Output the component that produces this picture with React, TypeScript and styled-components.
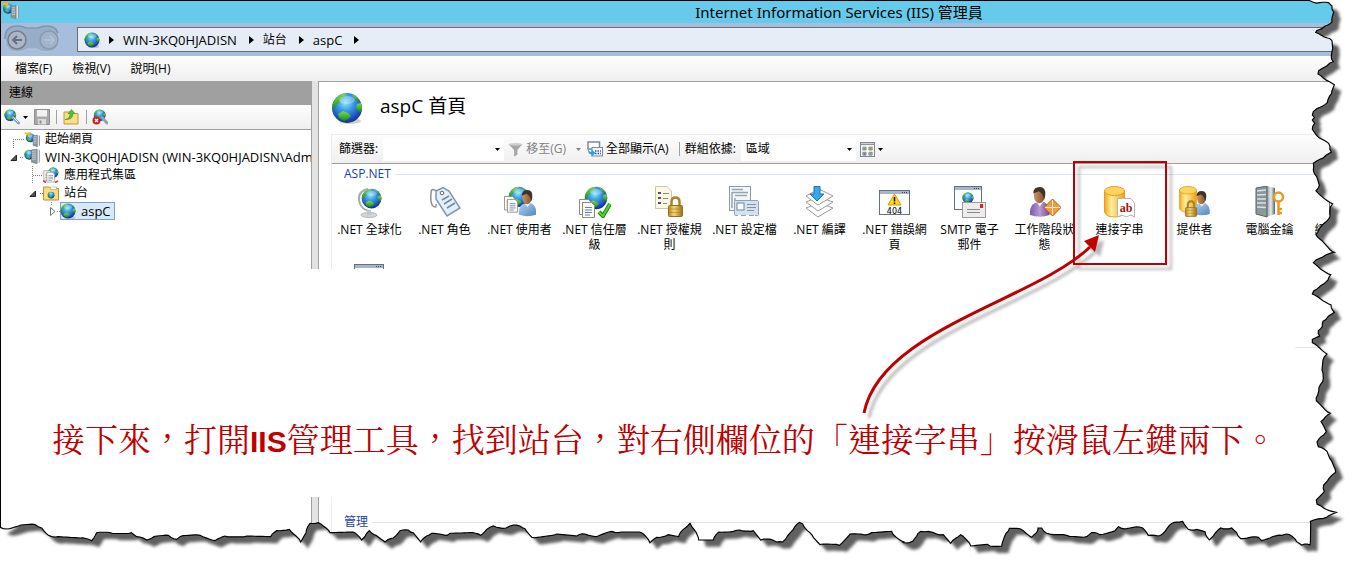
import React from "react";
import styled, { createGlobalStyle } from "styled-components";

const ui = `"Open Sans", "Noto Sans CJK TC", sans-serif`;

const GlobalStyle = createGlobalStyle`
  *, *::before, *::after { box-sizing: border-box; }
  body { margin: 0; background: #fff; font: 12px/18px ${ui}; color: #000; }
  button, input, select { font: inherit; color: inherit; }
  ul { list-style: none; margin: 0; padding: 0; }
`;

/* ---------- layout ---------- */

const Frame = styled.main`
  position: relative;
  display: flex;
  flex-direction: column;
  min-height: 100vh;
  padding: 1px 0 0 1px;
  overflow: hidden;
  box-shadow: inset 1px 1px 0 #000;
`;

const TitleBar = styled.header`
  display: grid;
  grid-template-columns: 1fr auto 1fr;
  height: 22px;
  background: #66cbea;
`;

const Title = styled.h1`
  margin: 0;
  padding-left: 320px;
  font: 400 15px/22px "Noto Sans", "Noto Sans CJK TC", sans-serif;
  white-space: nowrap;
`;

const NavBar = styled.nav`
  display: flex;
  align-items: center;
  height: 33px;
  padding-left: 3px;
  background: #a6bedb;
`;

const NavButtons = styled.div`
  position: relative;
  display: flex;
  gap: 10px;
  width: 73px;
  height: 29px;
  padding: 4px 3px;
`;

const NavShape = styled.svg`
  position: absolute;
  left: 0;
  top: 0;
`;

const RoundButton = styled.button`
  position: relative;
  width: 22px;
  height: 22px;
  padding: 0;
  border: 0;
  background: none;
`;

const Address = styled.div`
  display: flex;
  flex: 1;
  align-items: center;
  height: 25px;
  padding-left: 6px;
  border: 1px solid #656d79;
  background: #e6edf6;
`;

const Crumb = styled.a<{ $latin?: boolean }>`
  padding-right: 3px;
  font-size: ${(p) => (p.$latin ? 13 : 12)}px;
  color: #000;
  text-decoration: none;
  white-space: nowrap;
`;

const Arrow = styled.svg`
  margin: 0 9px;
  flex: none;
`;

const MenuBar = styled.div`
  display: flex;
  gap: 20px;
  height: 25px;
  padding: 0 14px;
  background: linear-gradient(#fdfdfd, #efefef);
`;

const PlainButton = styled.button`
  display: flex;
  align-items: center;
  gap: 3px;
  padding: 0;
  border: 0;
  background: none;
  white-space: nowrap;
  &:disabled { color: #838383; }
`;

const Workspace = styled.div`
  display: flex;
  height: 188px;
`;

const Connections = styled.aside`
  width: 310px;
  flex: none;
  overflow: hidden;
`;

const PanelTitle = styled.h2`
  margin: 0;
  padding-left: 8px;
  height: 24px;
  font: 400 12px/24px ${ui};
  background: #a0a0a0;
`;

const PanelTools = styled.div`
  display: flex;
  align-items: center;
  height: 25px;
  padding-left: 3px;
  border-bottom: 1px solid #a0a0a0;
  background: linear-gradient(#fdfdfd, #efefef);
`;

const ToolSeparator = styled.span<{ $gap: number }>`
  width: 1px;
  height: 14px;
  margin: 0 ${(p) => p.$gap}px;
  background: #a0a0a0;
`;

const Splitter = styled.div`
  width: 8px;
  flex: none;
  border: solid #a0a0a0;
  border-width: 0 1px;
  background: #e3e3e3;
`;

const TreeRow = styled.li`
  display: flex;
  align-items: center;
  height: 18px;
  white-space: nowrap;
`;

const TreeGuide = styled.svg`
  flex: none;
`;

const TreeLabel = styled.span<{ $selected?: boolean; $latin?: boolean }>`
  display: flex;
  align-items: center;
  gap: 5px;
  height: 18px;
  padding-right: 4px;
  font-size: ${(p) => (p.$latin ? 13 : 12)}px;
  ${(p) => p.$selected && "background: #d9e8fb; box-shadow: inset 0 0 0 1px #7da2ce;"}
`;

const Home = styled.section`
  flex: 1;
  min-width: 0;
  padding-left: 12px;
  border-top: 1px solid #a0a0a0;
  overflow: hidden;
`;

const HomeHeading = styled.div`
  display: flex;
  align-items: center;
  gap: 17px;
  height: 52px;
`;

const HomeTitle = styled.h2`
  margin: 0;
  padding-bottom: 4px;
  font: 400 19px/24px ${ui};
`;

const Features = styled.div`
  border: solid #ececec;
  border-width: 1px 0 0 1px;
`;

const FilterBar = styled.div`
  display: flex;
  align-items: center;
  height: 29px;
  padding-left: 7px;
  border-bottom: 1px solid #a0a0a0;
  background: linear-gradient(#fdfdfd, #efefef);
`;

const Combo = styled.div<{ $width: number }>`
  display: flex;
  align-items: center;
  width: ${(p) => p.$width}px;
  height: 23px;
  margin-left: 5px;
  padding-right: 4px;
  background: #fff;
`;

const ComboInput = styled.input`
  flex: 1;
  min-width: 0;
  padding: 0 4px;
  border: 0;
  background: none;
`;

const ComboSelect = styled.select`
  flex: 1;
  min-width: 0;
  padding: 0 5px;
  border: 0;
  background: none;
  appearance: none;
`;

const Spacer = styled.span<{ $width: number }>`
  width: ${(p) => p.$width}px;
`;

const GroupHeading = styled.h3`
  display: flex;
  align-items: center;
  gap: 4px;
  height: 20px;
  margin: 0;
  padding-left: 12px;
  font: 400 12px/20px ${ui};
  color: #1e3f9f;
  &::after { content: ""; flex: 1; height: 1px; background: #dde6f0; }
`;

const FeatureGrid = styled.ul`
  display: grid;
  grid-template-columns: repeat(14, 75px);
  grid-auto-rows: 78px;
  padding-top: 2px;
`;

const Feature = styled.li`
  display: flex;
  flex-direction: column;
  align-items: center;
  gap: 4px;
  line-height: 15px;
  text-align: center;
`;

const FeatureLabel = styled.span`
  width: 70px;
  word-break: break-all;
`;

const Note = styled.div`
  position: relative;
  display: flex;
  align-items: center;
  height: 228px;
  padding: 0 0 0 51px;
  font: 400 33px/48px "Noto Serif CJK TC", "Noto Sans CJK TC", serif;
  color: #c00000;
  white-space: nowrap;
`;

const NoteText = styled.p`
  margin: 0;
  padding-top: 114px;
  b { font: 700 30px/48px "Liberation Sans", sans-serif; }
`;

const GroupLine = styled.span`
  position: absolute;
  right: 0;
  top: 78px;
  width: 62px;
  height: 1px;
  background: #dde6f0;
`;

const Lower = styled.div`
  display: flex;
  flex: 1;
  padding-left: 310px;
`;

const LowerGroup = styled.div`
  flex: 1;
  margin-left: 12px;
  padding-top: 15px;
  border-left: 1px solid #ececec;
`;

const TornEdge = styled.svg`
  position: absolute;
  left: 0;
  top: 0;
  width: 100%;
  height: 100%;
  pointer-events: none;
`;

const Callout = styled.svg`
  position: absolute;
  left: 0;
  top: 0;
  pointer-events: none;
`;

const SharedDefs = styled.svg`
  position: absolute;
`;

/* ---------- drawings ---------- */

const Defs = () => (
  <SharedDefs width="0" height="0" aria-hidden="true">
    <defs>
      <radialGradient id="sea" cx="45%" cy="32%" r="68%">
        <stop offset="0" stopColor="#8fe6fb" />
        <stop offset=".4" stopColor="#3a9be4" />
        <stop offset=".8" stopColor="#1f4fc0" />
        <stop offset="1" stopColor="#132f86" />
      </radialGradient>
      <linearGradient id="land" x1="0" y1="0" x2="0" y2="1">
        <stop offset="0" stopColor="#7fdc45" />
        <stop offset="1" stopColor="#128c1c" />
      </linearGradient>
      <linearGradient id="gold" x1="0" x2="1">
        <stop offset="0" stopColor="#f3a81c" />
        <stop offset=".35" stopColor="#fff0a0" />
        <stop offset="1" stopColor="#f0a010" />
      </linearGradient>
      <linearGradient id="brass" x1="0" x2="1">
        <stop offset="0" stopColor="#b98420" />
        <stop offset=".4" stopColor="#f4d87a" />
        <stop offset="1" stopColor="#a06c12" />
      </linearGradient>
      <linearGradient id="steel" x1="0" x2="1">
        <stop offset="0" stopColor="#9aa2a8" />
        <stop offset=".5" stopColor="#e6eaec" />
        <stop offset="1" stopColor="#5b646b" />
      </linearGradient>
      <linearGradient id="skin" x1="0" x2="1">
        <stop offset="0" stopColor="#c99565" />
        <stop offset="1" stopColor="#80512c" />
      </linearGradient>
      <linearGradient id="shirt" x1="0" x2="1" y2="1">
        <stop offset="0" stopColor="#b4d2f0" />
        <stop offset="1" stopColor="#5485ba" />
      </linearGradient>
      <linearGradient id="purple" x1="0" x2="1">
        <stop offset="0" stopColor="#7a5aa8" />
        <stop offset=".5" stopColor="#b79ad6" />
        <stop offset="1" stopColor="#6a4a98" />
      </linearGradient>
    </defs>
  </SharedDefs>
);

type Spot = { x?: number; y?: number; s?: number };

/* Each part is drawn on a grid of its own and placed with x, y and scale s. */
const place = ({ x = 0, y = 0, s = 1 }: Spot) => `translate(${x} ${y}) scale(${s})`;

const Globe = (p: Spot) => (
  <g transform={place(p)}>
    <circle cx="16" cy="16" r="15" fill="url(#sea)" />
    <path d="M3 9Q7 2 14 1.500L16 3L12 5L9 7L8 11L5 13L2 18Q0 13 3 9Z" fill="url(#land)" />
    <path d="M21 2Q27 5 29 10L26 9L23 6Z" fill="url(#land)" />
    <path d="M26 12L30 11Q32 16 30 20L27 19L25 16Z" fill="url(#land)" />
    <path d="M7 22L12 19L17 21L20 24L17 27L13 29L8 26Z" fill="url(#land)" />
    <ellipse cx="16" cy="8" rx="8" ry="4" fill="#fff" opacity=".25" />
  </g>
);

const Sheet = (p: Spot) => (
  <g transform={place(p)}>
    <path d="M.5.5H9.500L12.500 3.500V15.500H.5Z" fill="#fdfcf6" stroke="#8f8a7a" />
    <path d="M3 5.500H10M3 8H10M3 10.500H10M3 13H8" stroke="#5f7fb0" />
  </g>
);

const Person = ({ fill = "url(#shirt)", ...p }: Spot & { fill?: string }) => (
  <g transform={place(p)}>
    <path d="M1 26Q0 17 6 14.500L14 14Q20 17 19 26Q10 29 1 26Z" fill={fill} />
    <path d="M7 14L10 18L13 14Z" fill="#f5f5f5" />
    <ellipse cx="9.500" cy="8" rx="5" ry="7" fill="url(#skin)" />
    <path d="M4 6Q4 0 10 0Q16 0 15 8L14 12Q13 6 9 4Z" fill="#3f3428" />
  </g>
);

const Drum = (p: Spot) => (
  <g transform={place(p)}>
    <path d="M.5 5V26Q2 31 10.500 31T20.500 26V5Z" fill="url(#gold)" stroke="#e2a020" />
    <ellipse cx="10.500" cy="5" rx="10" ry="4.500" fill="#fbd560" stroke="#e2a020" />
  </g>
);

const Padlock = (p: Spot) => (
  <g transform={place(p)}>
    <path d="M3.500 10V6Q3.500 1.500 7.500 1.500T11.500 6V10" fill="none" stroke="#a8812c" strokeWidth="2.500" />
    <rect x=".5" y="9.500" width="14" height="11" rx="1" fill="url(#brass)" stroke="#94701f" />
    <path d="M1 13H14M1 16.500H14" stroke="#a9812f" opacity=".6" />
  </g>
);

const Win = ({ w, h, ...p }: Spot & { w: number; h: number }) => (
  <g transform={place(p)}>
    <rect x=".5" y=".5" width={w - 1} height={h - 1} fill="#fbfcfd" stroke="#66717f" />
    <rect x="1" y="1" width={w - 2} height="3" fill="#a8b4c8" />
    <path d={`M${w - 8} 2.500H${w - 2}`} stroke="#445" strokeDasharray="1 1" />
  </g>
);

const Tower = (p: Spot) => (
  <g transform={place(p)}>
    <path d="M0 2L11 0V31L0 28Z" fill="#8b959c" />
    <path d="M11 0L19 2V28L11 31Z" fill="url(#steel)" />
    <path d="M1 5L10 4M1 9L10 8.500M1 13H10M1 17H10M1 21L10 21.500" stroke="#d9e0e4" strokeWidth="1.500" />
    <path d="M0 2L11 0V31L0 28Z" fill="none" stroke="#59636b" />
    <rect x="7" y="27" width="2" height="2" fill="#4bdc2c" />
  </g>
);

const icons: Record<string, React.ReactNode> = {
  globalization: (
    <>
      <path d="M14 3Q4 5 5 14T15 25" fill="none" stroke="#a9adb0" strokeWidth="2" />
      <ellipse cx="15" cy="29" rx="8" ry="2.500" fill="#d4d7d9" stroke="#b4b8ba" />
      <rect x="13" y="24" width="4" height="5" fill="#c3c6c9" />
      <Globe x={7} y={2} s={0.66} />
    </>
  ),
  roles: (
    <>
      <path d="M10 7Q2 0 2 7Q1 17 4 20Q8 23 7 18" fill="none" stroke="#8b9299" strokeWidth="1.500" />
      <path d="M7 5L14 1.500L20 5L31 22L18 30L7 13Z" fill="#e3eef7" stroke="#7c98ae" strokeWidth="1.500" />
      <circle cx="13" cy="7" r="1.800" fill="#fff" stroke="#666" />
      <path d="M13 14L20 10M15 18L23 13M18 22L26 17" stroke="#7388a4" strokeWidth="1.500" />
    </>
  ),
  users: (
    <>
      <Globe x={4} y={0} s={0.68} />
      <Sheet x={0} y={10} s={0.9} />
      <Sheet x={3} y={13} s={0.85} />
      <Person x={14} y={4} s={0.95} />
    </>
  ),
  trust: (
    <>
      <Globe x={5} y={0} s={0.75} />
      <Sheet x={0} y={13} />
      <Sheet x={3} y={16} />
      <path d="M20 26L24 30L31 18" fill="none" stroke="#118c12" strokeWidth="4" />
      <path d="M20 26L24 30L31 18" fill="none" stroke="#55d62c" strokeWidth="2" />
    </>
  ),
  rules: (
    <>
      <path d="M1.500.5H13L17.500 5V22.500H1.500Z" fill="#fdf8e4" stroke="#cfc6a4" />
      <path d="M4 7H7M4 12H7M4 17H7" stroke="#555" strokeWidth="2" />
      <path d="M9 7.500H15M9 12.500H14M9 17.500H13" stroke="#888" />
      <Padlock x={14} y={10} />
    </>
  ),
  profile: (
    <>
      <rect x=".5" y=".5" width="21" height="24" fill="#f4f7fa" stroke="#8e99a6" />
      <path d="M3 3.500H14M3 6V22M3 6.500H19M6 9.500H18M6 12V20" stroke="#98a3b0" strokeWidth="1.500" fill="none" />
      <rect x="5.500" y="14.500" width="24" height="15" rx="1" fill="#d5e1ed" stroke="#8fa3b8" />
      <rect x="8" y="17" width="7" height="7" fill="#fff" stroke="#6788b0" />
      <path d="M18 18.500H27M18 21.500H27M18 24.500H25" stroke="#7c93ad" />
      <path d="M9 30H26" stroke="#fff" strokeWidth="2" strokeDasharray="3 5" />
    </>
  ),
  compile: (
    <>
      <path d="M2 22L15 17L29 22L14 31Z" fill="#fff" stroke="#9a9a9a" />
      <path d="M2 16L15 11L29 16L14 25Z" fill="#fff" stroke="#9a9a9a" />
      <path d="M2 10L15 3L29 10L14 19Z" fill="#fff" stroke="#9a9a9a" />
      <path d="M10 .5H16V8H20L13 15L6 8H10Z" fill="#36a9ec" stroke="#1673b8" />
    </>
  ),
  errors: (
    <>
      <Win x={0} y={4} w={31} h={25} />
      <path d="M15.500 8L22 19H9Z" fill="#ffd91a" stroke="#d39c00" />
      <path d="M15.500 11V15.500M15.500 16.500V18" stroke="#111" strokeWidth="1.500" />
      <text x="15.500" y="27.500" textAnchor="middle" fontFamily="DejaVu Sans" fontSize="8">404</text>
    </>
  ),
  smtp: (
    <>
      <Win x={0} y={0} w={28} h={24} />
      <Globe x={8} y={6} s={0.37} />
      <rect x="8.500" y="16.500" width="23" height="15" fill="#ececec" stroke="#9b9b9b" />
      <path d="M13 23.500H26M13 26.500H26" stroke="#8a8a8a" />
      <rect x="26" y="18" width="3" height="4" fill="#e02020" />
    </>
  ),
  session: (
    <>
      <Person x={0} y={1} s={1.08} fill="url(#purple)" />
      <path d="M23.500 13L32 21.500L23.500 30L15 21.500Z" fill="#f79a3a" stroke="#b4570a" />
      <path d="M23.500 14V29M16 21.500H31" stroke="#fff0d8" />
    </>
  ),
  connection: (
    <>
      <Drum />
      <path d="M13.500 12.500H27L30.500 17V31L27 29L22 31L18 29L13.500 31Z" fill="#fff" stroke="#b5b5b5" />
      <text x="22" y="26" textAnchor="middle" fontFamily="Liberation Serif" fontWeight="700" fontSize="12" fill="#a01515">ab</text>
    </>
  ),
  providers: (
    <>
      <Drum s={0.85} />
      <Person x={14} y={5} s={0.88} />
      <Padlock x={6} y={14} s={0.8} />
    </>
  ),
  machineKey: (
    <>
      <Tower x={2} y={0} />
      <circle cx="24.500" cy="11" r="4.500" fill="#fff" stroke="#e59a24" strokeWidth="2.500" />
      <path d="M24.500 15V29M24.500 23H28M24.500 27H28" fill="none" stroke="#e59a24" strokeWidth="2.500" />
    </>
  ),
  pages: <Win x={0} y={3} w={31} h={26} />,
  window: <Win x={0} y={0} w={30} h={26} />,
  start: (
    <>
      <Globe x={3} y={4} s={0.6} />
      <path d="M2 6L14 1L12 7Z" fill="#f6b51e" />
      <path d="M1 4Q8 4 12 10" fill="none" stroke="#f6b51e" strokeWidth="3" />
      <Tower x={18} y={8} s={0.75} />
    </>
  ),
  server: (
    <>
      <Globe x={0} y={1} s={0.66} />
      <Tower x={15} y={0} s={0.95} />
    </>
  ),
  pools: (
    <>
      <Globe x={9} y={0} s={0.7} />
      <Sheet x={1} y={7} s={1.3} />
      <Sheet x={7} y={10} s={1.3} />
      <path d="M0 28L6 31M24 31L30 28" stroke="#d83a2a" strokeWidth="3" />
    </>
  ),
  sites: (
    <>
      <path d="M1 4H13L16 7H31V30H1Z" fill="#f7dc83" stroke="#b99336" strokeWidth="2" />
      <path d="M15 4H27V9H15Z" fill="#fff" stroke="#b99336" />
      <Globe x={9} y={13} s={0.45} />
    </>
  ),
  globe: (
    <>
      <ellipse cx="19" cy="29" rx="11" ry="3" fill="#888" opacity=".4" />
      <Globe />
    </>
  ),
  connect: (
    <>
      <Globe s={0.78} />
      <path d="M18 17L29 28" stroke="#86a5bd" strokeWidth="6" strokeLinecap="round" />
      <path d="M19 17L28 26" stroke="#e8f1f7" strokeWidth="2" />
    </>
  ),
  disconnect: (
    <>
      <Globe x={3} s={0.78} />
      <path d="M20 17L30 28" stroke="#86a5bd" strokeWidth="6" strokeLinecap="round" />
      <circle cx="9" cy="23" r="8" fill="#cf2020" />
      <path d="M6 20L12 26M12 20L6 26" stroke="#fff" strokeWidth="2.500" />
    </>
  ),
  save: (
    <>
      <path d="M1 1H31V31H1Z" fill="#a9a9a9" stroke="#8e8e8e" strokeWidth="2" />
      <rect x="6" y="2" width="20" height="13" fill="#f2f2f2" />
      <rect x="8" y="20" width="16" height="11" fill="#dcdcdc" />
      <rect x="11" y="23" width="4" height="6" fill="#8e8e8e" />
    </>
  ),
  folderUp: (
    <>
      <path d="M2 6H14L17 9H30V30H2Z" fill="#f8dd8a" stroke="#c09a3c" strokeWidth="2" />
      <path d="M4 21Q14 20 14 9H10L17 1L24 9H20Q20 22 4 21Z" fill="#4fc22c" stroke="#2a8c17" />
    </>
  ),
  funnel: (
    <>
      <path d="M1 4H31L20 17V27L13 31V17Z" fill="#a6a6a6" />
      <ellipse cx="16" cy="5" rx="14" ry="3" fill="#cfcfcf" />
    </>
  ),
  showAll: (
    <>
      <path d="M2 2H25V16H2Z" fill="#fff" stroke="#7e8b98" strokeWidth="3" />
      <rect x="10" y="13" width="21" height="17" fill="#f3f5f8" stroke="#7e8b98" strokeWidth="2" />
      <path d="M16 20H28M16 25H28" stroke="#3d62a8" strokeWidth="3" strokeDasharray="3 2" />
      <path d="M2 14Q3 22 9 22V17L17 24L9 31V27Q1 26 2 14Z" fill="#2f9be0" />
    </>
  ),
  view: (
    <>
      <rect x="1" y="1" width="30" height="30" fill="#f6f6f3" stroke="#777f88" strokeWidth="2" />
      <path d="M2 5H30" stroke="#8a929b" strokeWidth="3" />
      <path d="M6 11h7v6H6zM19 11h7v6h-7zM6 22h7v6H6zM19 22h7v6h-7z" fill="#b8c8b0" stroke="#6b7680" strokeWidth="1.500" />
      <path d="M8 13h3v3H8zM21 24h3v3h-3z" fill="#4db030" />
      <path d="M21 13h3v3h-3z" fill="#d86a30" />
      <path d="M8 24h3v3H8z" fill="#4455d0" />
    </>
  ),
};

const IconSvg = styled.svg`
  flex: none;
  display: block;
`;

const Icon = ({ name, size = 32 }: { name: string; size?: number }) => (
  <IconSvg width={size} height={size} viewBox="0 0 32 32" aria-hidden="true">
    {icons[name]}
  </IconSvg>
);

const Caret = ({ color = "#000" }: { color?: string }) => (
  <IconSvg width="5" height="3" viewBox="0 0 5 3" aria-hidden="true">
    <path d="M0 0H5L2.500 3Z" fill={color} />
  </IconSvg>
);

const CrumbArrow = () => (
  <Arrow width="5" height="8" viewBox="0 0 5 8" aria-hidden="true">
    <path d="M0 0L5 4L0 8Z" />
  </Arrow>
);

/* ---------- torn paper edge ---------- */

type Point = [number, number];

const points = (dx: number, dy: number, text: string): Point[] =>
  text.split(" ").map((pair) => {
    const [x, y] = pair.split(",").map(Number);
    return [x + dx, y + dy];
  });

const edge: Point[] = [
  ...points(3360, 0, "570,2 578,6 600,8 625,8 636,18 636,28 641,36 637,50 636,66 622,76 606,86 590,92 587,97 604,106 622,114 636,122 638,145 635,160 635,178 640,185 620,198 596,212 594,222 610,234 630,246 643,254 636,272 628,290 622,308 600,322 580,335 577,345 583,352 577,360 584,370 577,388 588,404 606,418 626,430 630,440 634,456 618,466 600,478 580,490 580,510 590,530 598,555 588,572 606,590 638,612 630,628 630,650 610,672 596,690 588,704 606,722 624,742 643,757 616,766 596,776 580,788 594,800 632,824 624,840 604,856 592,866"),
  ...points(3771, 840, "170,33 166,42 190,56 222,75 232,97 215,108 198,124 196,140 184,152 188,168 166,178 166,188 188,204 210,222 198,240 195,270 197,305 186,322 182,345 178,362 198,382 220,400 204,412 192,425 200,438 208,455 192,470 180,486 184,500 210,514 218,535 236,577 216,595 200,615 202,635 178,660 180,672 200,684 225,694 238,697 218,706 190,716 160,724"),
  ...points(2700, 1470, "1230,165 1205,165 1190,155 1175,138 1160,132 1145,136 1110,144 1085,152 1075,142 1050,142 1022,146 1010,128 995,114 962,114 945,130 928,150 915,125 890,118 865,118 848,94 830,96 808,106 795,124 775,138 745,136 728,114 700,112 680,116 655,110 645,122 600,134 575,128 560,140 500,136 470,134 440,130 425,114 414,114 408,130 395,142 370,122 350,115 328,115 318,130 305,168 270,168 262,163 212,168 200,150 182,134 168,144 152,160 130,134 100,128 85,124 62,124 50,138 38,154 10,158"),
  ...points(1350, 1470, "1362,156 1340,143 1325,124 1265,128 1240,134 1200,132 1168,166 1110,164 1090,142 1072,122 1058,102 1048,97 1030,118 1012,138 998,156 980,156 968,150 932,150 910,122 870,120 850,124 806,126 790,150 746,150 732,118 720,100 700,118 686,140 655,134 620,142 600,158 588,140 568,126 515,126 485,124 440,140 405,132 380,138 320,132 246,142 225,116 210,108 180,108 168,114 130,108 110,118 92,136 60,128 0,130"),
  ...points(0, 1470, "1335,136 1295,130 1280,138 1262,156 1240,128 1225,120 1200,122 1180,144 1155,156 1128,136 1108,122 1100,130 1085,150 1060,126 990,128 970,108 955,98 930,100 918,128 902,156 888,138 868,118 830,122 812,140 740,138 675,138 645,152 600,136 540,140 530,148 505,136 462,140 440,150 410,140 394,128 330,128 290,128 275,152 240,144 175,140 145,136 125,114 105,104 55,108 30,116 0,112"),
];

/* Splits long runs and nudges the new points, which gives the paper its rough fibres. */
const roughen = (line: Point[]): Point[] => {
  const out: Point[] = [line[0]];
  for (let i = 1; i < line.length; i++) {
    const [ax, ay] = line[i - 1];
    const [bx, by] = line[i];
    const length = Math.hypot(bx - ax, by - ay);
    const steps = Math.max(1, Math.floor(length / 8));
    for (let k = 1; k < steps; k++) {
      const nudge = length > 65 && ax === bx ? 0 : (((i * 7 + k * 5) % 5) - 2) * 1.2;
      const flat = Math.abs(bx - ax) > Math.abs(by - ay);
      out.push([
        ax + ((bx - ax) * k) / steps + (flat ? 0 : nudge),
        ay + ((by - ay) * k) / steps + (flat ? nudge : 0),
      ]);
    }
    out.push([bx, by]);
  }
  return out;
};

const edgeLine = roughen(edge).map(([x, y]) => `${x.toFixed(1)},${y.toFixed(1)}`).join("L");
const paper = `M0,0L3930,0L${edgeLine}Z`;
const outside = `M-30,-30H4200V1800H-30Z${paper}`;

const Torn = () => (
  <TornEdge viewBox="0 0 4071 1704" preserveAspectRatio="none" aria-hidden="true">
    <defs>
      <clipPath id="beyond"><path d={outside} clipRule="evenodd" /></clipPath>
      <filter id="soft" x="-5%" y="-5%" width="110%" height="110%"><feGaussianBlur stdDeviation="5" /></filter>
    </defs>
    <g clipPath="url(#beyond)">
      <rect width="4071" height="1704" fill="#fff" />
      <path d={`M30,30H3930L${edgeLine}L30,1560Z`} transform="translate(21 20)" fill="#606060" filter="url(#soft)" />
      <path d="M-10,1400H18V1704H-10Z" fill="#fff" />
    </g>
    <path d={`M${edgeLine}`} fill="none" stroke="#000" strokeWidth="3.500" />
  </TornEdge>
);

/* ---------- data ---------- */

const features: [string, string][] = [
  ["globalization", ".NET 全球化"],
  ["roles", ".NET 角色"],
  ["users", ".NET 使用者"],
  ["trust", ".NET 信任層級"],
  ["rules", ".NET 授權規則"],
  ["profile", ".NET 設定檔"],
  ["compile", ".NET 編譯"],
  ["errors", ".NET 錯誤網頁"],
  ["smtp", "SMTP 電子郵件"],
  ["session", "工作階段狀態"],
  ["connection", "連接字串"],
  ["providers", "提供者"],
  ["machineKey", "電腦金鑰"],
  ["pages", "網頁和控制"],
  ["window", ""],
];

type Node = {
  icon: string;
  label: string;
  indent: number;
  lines: string;
  latin?: boolean;
  mark?: "open" | "closed";
  markX?: number;
  selected?: boolean;
};

const nodes: Node[] = [
  { icon: "start", label: "起始網頁", indent: 23, lines: "M12.500 9V18M12 9.500H23" },
  { icon: "server", label: "WIN-3KQ0HJADISN (WIN-3KQ0HJADISN\\Admi", indent: 23, lines: "M19 9.500H23", latin: true, mark: "open", markX: 10 },
  { icon: "pools", label: "應用程式集區", indent: 42, lines: "M31.500 0V18M32 9.500H42" },
  { icon: "sites", label: "站台", indent: 42, lines: "M39 9.500H42", mark: "open", markX: 29 },
  { icon: "globe", label: "aspC", indent: 59, lines: "M50.500 0V3M56 9.500H59", latin: true, mark: "closed", markX: 49, selected: true },
];

export default function App() {
  return (
    <Frame>
      <GlobalStyle />
      <Defs />
      <TitleBar>
        <Icon name="start" size={18} />
        <Title>Internet Information Services (IIS) 管理員</Title>
      </TitleBar>
      <NavBar>
        <NavButtons>
          <NavShape width="56" height="29" viewBox="0 0 56 29" aria-hidden="true">
            <path d="M1 14Q1 1 13 1Q18 1 22 3H34Q38 1 43 1Q55 1 55 14T43 27Q37 27 33 24H23Q19 27 13 27Q1 27 1 14Z" fill="#98adc8" stroke="#b8c8dc" />
            <path d="M1 14Q1 1 13 1Q18 1 22 3H34Q38 1 43 1Q52 1 54 8" fill="none" stroke="#7d92ae" strokeWidth="1.500" />
          </NavShape>
          <RoundButton aria-label="上一頁">
            <svg width="22" height="22" viewBox="0 0 22 22">
              <circle cx="10" cy="11" r="9" fill="#a9b7c8" stroke="#757f8c" strokeWidth="1.500" />
              <path d="M15 11H6M10 7L6 11L10 15" fill="none" stroke="#68727e" strokeWidth="2" />
            </svg>
          </RoundButton>
          <RoundButton aria-label="下一頁">
            <svg width="22" height="22" viewBox="0 0 22 22">
              <circle cx="10" cy="11" r="9" fill="#a0b3ca" stroke="#8b99ab" strokeWidth="1.500" />
              <path d="M5 11H15M11 7L15 11L11 15" fill="none" stroke="#b4c4d7" strokeWidth="1.500" />
            </svg>
          </RoundButton>
        </NavButtons>
        <Address>
          <Icon name="globe" size={16} />
          <CrumbArrow />
          <Crumb href="#server" $latin>WIN-3KQ0HJADISN</Crumb>
          <CrumbArrow />
          <Crumb href="#sites">站台</Crumb>
          <CrumbArrow />
          <Crumb href="#aspc" $latin>aspC</Crumb>
          <CrumbArrow />
        </Address>
      </NavBar>
      <MenuBar>
        <PlainButton>檔案(F)</PlainButton>
        <PlainButton>檢視(V)</PlainButton>
        <PlainButton>說明(H)</PlainButton>
      </MenuBar>
      <Workspace>
        <Connections>
          <PanelTitle>連線</PanelTitle>
          <PanelTools>
            <PlainButton aria-label="連線到"><Icon name="connect" size={16} /><Caret /></PlainButton>
            <Spacer $width={6} />
            <PlainButton aria-label="儲存" disabled><Icon name="save" size={16} /></PlainButton>
            <ToolSeparator $gap={6} />
            <PlainButton aria-label="向上"><Icon name="folderUp" size={16} /></PlainButton>
            <Spacer $width={2} />
            <ToolSeparator $gap={5} />
            <PlainButton aria-label="中斷連線"><Icon name="disconnect" size={16} /></PlainButton>
          </PanelTools>
          <ul>
            {nodes.map((n) => (
              <TreeRow key={n.label}>
                <TreeGuide width={n.indent} height="18" aria-hidden="true">
                  <path d={n.lines} fill="none" stroke="#808080" strokeDasharray="1 1" />
                  {n.mark === "open" && <path d="M5.500 7V12.500H0Z" transform={`translate(${n.markX} 0)`} fill="#555" stroke="#222" />}
                  {n.mark === "closed" && <path d="M.5 5.500L5 9.500L.5 13.500Z" transform={`translate(${n.markX} 0)`} fill="#fff" stroke="#777" />}
                </TreeGuide>
                <TreeLabel $selected={n.selected} $latin={n.latin}>
                  <Icon name={n.icon} size={16} />
                  {n.label}
                </TreeLabel>
              </TreeRow>
            ))}
          </ul>
        </Connections>
        <Splitter />
        <Home>
          <HomeHeading>
            <Icon name="globe" size={32} />
            <HomeTitle>aspC 首頁</HomeTitle>
          </HomeHeading>
          <Features>
            <FilterBar>
              <label htmlFor="filter">篩選器:</label>
              <Combo $width={121}>
                <ComboInput id="filter" />
                <Caret />
              </Combo>
              <Spacer $width={4} />
              <PlainButton disabled><Icon name="funnel" size={15} />移至(G)</PlainButton>
              <Spacer $width={10} />
              <Caret color="#838383" />
              <Spacer $width={6} />
              <PlainButton><Icon name="showAll" size={16} />全部顯示(A)</PlainButton>
              <Spacer $width={5} />
              <ToolSeparator $gap={5} />
              <label htmlFor="group">群組依據:</label>
              <Combo $width={115}>
                <ComboSelect id="group" defaultValue="area">
                  <option value="area">區域</option>
                </ComboSelect>
                <Caret />
              </Combo>
              <Spacer $width={4} />
              <PlainButton aria-label="檢視"><Icon name="view" size={15} /><Caret /></PlainButton>
            </FilterBar>
            <GroupHeading>ASP.NET</GroupHeading>
            <FeatureGrid>
              {features.map(([icon, label]) => (
                <Feature key={icon}>
                  <Icon name={icon} />
                  <FeatureLabel>{label}</FeatureLabel>
                </Feature>
              ))}
            </FeatureGrid>
          </Features>
        </Home>
      </Workspace>
      <Note>
        <GroupLine />
        <NoteText>接下來，打開<b>IIS</b>管理工具，找到站台，對右側欄位的「連接字串」按滑鼠左鍵兩下。</NoteText>
      </Note>
      <Lower>
        <Splitter />
        <LowerGroup>
          <GroupHeading>管理</GroupHeading>
        </LowerGroup>
      </Lower>
      <Torn />
      <Callout width="1200" height="430" viewBox="0 0 1200 430" aria-hidden="true">
        <defs>
          <filter id="drop" x="-10%" y="-10%" width="125%" height="125%">
            <feDropShadow dx="5" dy="5" stdDeviation="1.500" floodColor="#000" floodOpacity=".28" />
          </filter>
        </defs>
        <g filter="url(#drop)">
          <rect x="1074" y="162" width="92" height="102" fill="none" stroke="#c00000" strokeWidth="2" />
          <path d="M864 413C880 330 1035 300 1090 247" fill="none" stroke="#c00000" strokeWidth="3" />
          <path d="M1099 235L1095 252L1084 241Z" fill="#c00000" />
        </g>
      </Callout>
    </Frame>
  );
}
